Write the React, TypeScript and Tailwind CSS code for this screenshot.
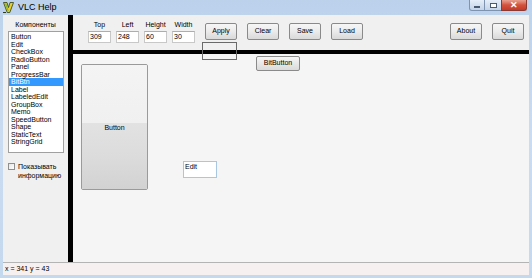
import * as React from 'react'

const items = [
  'Button',
  'Edit',
  'CheckBox',
  'RadioButton',
  'Panel',
  'ProgressBar',
  'BitBtn',
  'Label',
  'LabeledEdit',
  'GroupBox',
  'Memo',
  'SpeedButton',
  'Shape',
  'StaticText',
  'StringGrid',
]

const fields = [
  { label: 'Top', value: '309' },
  { label: 'Left', value: '248' },
  { label: 'Height', value: '60' },
  { label: 'Width', value: '30' },
]

function WinButton({ children, className = '' }: { children: React.ReactNode; className?: string }) {
  return (
    <div
      className={`flex h-[17px] w-[32px] items-center justify-center rounded-[2px] border border-[#8a8a8a] bg-gradient-to-b from-[#f6f6f6] via-[#ebebeb] to-[#d9d9d9] text-[7px] text-black ${className}`}
    >
      {children}
    </div>
  )
}

function VlcIcon() {
  return (
    <svg width="11" height="11" viewBox="0 0 11 11">
      <path d="M0.5 0.5 L4 0.5 L5.5 5.5 L7 0.5 L10.5 0.5 L6.8 10.5 L4.2 10.5 Z" fill="#e6cf2e" stroke="#2f3d12" strokeWidth="0.8" />
      <path d="M1.8 1.5 L3.3 1.5 L5.4 8.2 L4.8 9.4 Z" fill="#7fb83a" />
      <path d="M0 10.5 L3 10.5" stroke="#2f3d12" strokeWidth="1" />
    </svg>
  )
}

export default function App() {
  return (
    <div
      className="flex h-[278px] w-[532px] flex-col overflow-hidden bg-gradient-to-b from-[#bcd2ec] via-[#cadcf1] to-[#c4d8ee]"
      style={{ fontFamily: '"Liberation Sans", Arial, sans-serif' }}
    >
      {/* title bar */}
      <div className="flex h-[15px] shrink-0 items-start">
        <div className="ml-[3px] mt-[2px]">
          <VlcIcon />
        </div>
        <span className="ml-[4px] mt-[2px] text-[9px] leading-[11px] text-black">VLC Help</span>
        <div className="ml-auto mr-[5px] flex h-[11px]">
          <div className="flex w-[16px] items-end justify-center rounded-bl-[3px] border border-t-0 border-[#7d93b0] bg-gradient-to-b from-[#e5eef9] to-[#c3d3e8] pb-[2px]">
            <div className="h-[2px] w-[6px] border border-[#4a5a70] bg-white" />
          </div>
          <div className="flex w-[16px] items-center justify-center border-b border-[#7d93b0] bg-gradient-to-b from-[#e5eef9] to-[#c3d3e8]">
            <div className="h-[5px] w-[7px] border border-[#4a5a70] bg-white" />
          </div>
          <div className="flex w-[26px] items-center justify-center rounded-br-[3px] border border-t-0 border-[#8a3a30] bg-gradient-to-b from-[#e8a090] via-[#d2523e] to-[#c63a28] text-[9px] font-bold leading-none text-white">
            ✕
          </div>
        </div>
      </div>

      {/* client */}
      <div className="mx-[3px] flex flex-1 flex-col bg-[#f0f0f0]">
        <div className="flex h-[247px]">
          {/* left panel */}
          <div className="flex w-[65px] flex-col bg-[#f0f0f0] text-[7px] text-black">
            <div className="mt-[6px] text-center leading-[8px]">Компоненты</div>
            <div className="ml-[5px] mt-[2px] h-[122px] w-[56px] border border-[#a0a0a0] bg-white pt-[1px]">
              {items.map((t) => (
                <div
                  key={t}
                  className={`h-[7.5px] pl-[2px] leading-[7.5px] ${t === 'BitBtn' ? 'bg-[#3399ff] text-white' : ''}`}
                >
                  {t}
                </div>
              ))}
            </div>
            <div className="ml-[5px] mt-[9px] flex items-start gap-[3px]">
              <div className="mt-[1px] h-[7px] w-[7px] shrink-0 border border-[#8f8f8f] bg-gradient-to-br from-[#e6e6e6] to-white" />
              <div className="leading-[9px]">
                Показывать
                <br />
                информацию
              </div>
            </div>
          </div>

          {/* splitter */}
          <div className="w-[5px] bg-black" />

          {/* right column */}
          <div className="relative flex flex-1 flex-col">
            <div className="flex h-[35px] items-start bg-[#f0f0f0] pl-[15px] pr-[5px] text-[7px] text-black">
              <div className="flex gap-[5px]">
                {fields.map((f) => (
                  <div key={f.label} className="flex w-[23px] flex-col items-center">
                    <div className="mt-[6px] h-[10px] leading-[8px]">{f.label}</div>
                    <div className="h-[12px] w-[23px] border border-[#c8c8c8] border-t-[#abadb3] bg-white pl-[1px] leading-[10px]">
                      {f.value}
                    </div>
                  </div>
                ))}
              </div>
              <div className="ml-[10px] mt-[8px] flex gap-[10px]">
                <WinButton>Apply</WinButton>
                <WinButton>Clear</WinButton>
                <WinButton>Save</WinButton>
                <WinButton>Load</WinButton>
              </div>
              <div className="ml-auto mt-[8px] flex gap-[10px]">
                <WinButton>About</WinButton>
                <WinButton>Quit</WinButton>
              </div>
            </div>
            <div className="h-[4px] bg-black" />

            {/* design canvas */}
            <div className="relative flex-1 bg-[#f5f5f5] text-[7px] text-black">
              <div className="absolute left-[8px] top-[10px] flex h-[126px] w-[67px] flex-col overflow-hidden rounded-[2px] border border-[#9a9a9a]">
                <div className="h-[59px] bg-gradient-to-b from-[#f4f4f4] to-[#f0f0f0]" />
                <div className="flex h-[67px] flex-col bg-gradient-to-b from-[#e2e2e2] via-[#dcdcdc] to-[#d2d2d2]">
                  <div className="mt-[1px] text-center leading-[8px]">Button</div>
                </div>
              </div>
              <div className="absolute left-[110px] top-[107px] h-[17px] w-[34px] border border-[#a9c7e3] bg-white pl-[1px] pt-[1px] leading-[8px]">
                Edit
              </div>
              <div className="absolute left-[183px] top-[2px] flex h-[15px] w-[44px] items-center justify-center rounded-[2px] border border-[#8a8a8a] bg-gradient-to-b from-[#f6f6f6] to-[#dadada]">
                BitButton
              </div>
            </div>

            {/* selection frame */}
            <div className="absolute left-[129px] top-[27px] h-[18px] w-[35px] border border-[#6a6a6a]" />
          </div>
        </div>

        {/* status bar */}
        <div className="flex h-[13px] items-center border-t border-[#b4b4b4] bg-[#f6f0f0] pl-[2px] text-[7px] text-black">
          x = 341 y = 43
        </div>
      </div>
      <div className="h-[3px]" />
    </div>
  )
}
